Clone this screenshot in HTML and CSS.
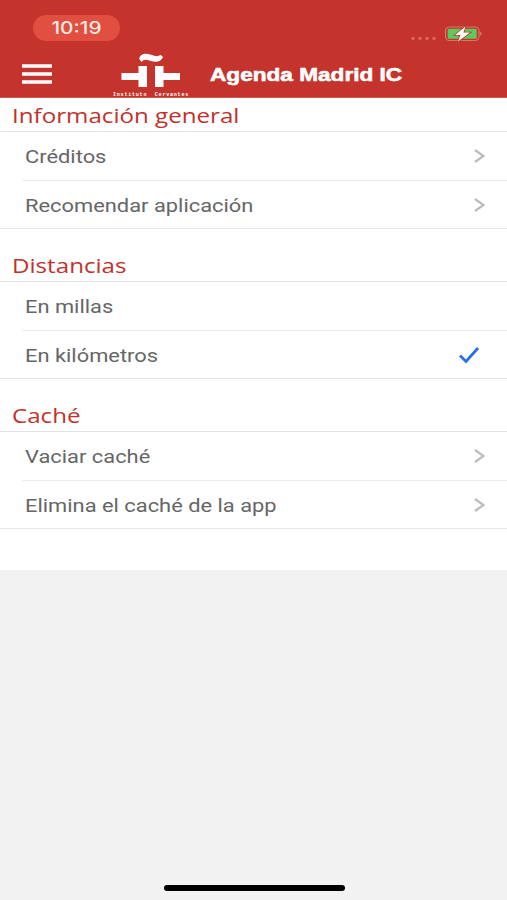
FILE: index.html
```html
<!DOCTYPE html>
<html lang="es">
<head>
<meta charset="utf-8">
<title>Agenda Madrid IC</title>
<link rel="stylesheet" href="styles.css">
</head>
<body>
<header class="top">
  <div class="status">
    <div class="clock"><span class="wide">10:19</span></div>
    <svg class="power" width="74" height="20" viewBox="0 0 74 20">
      <g fill="#da6a5c"><circle cx="4" cy="13.5" r="1.7"/><circle cx="11" cy="13.5" r="1.7"/><circle cx="18" cy="13.5" r="1.7"/><circle cx="25" cy="13.5" r="1.7"/></g>
      <rect x="36.5" y="2" width="33.5" height="13.5" rx="4" fill="none" stroke="#d67768" stroke-width="1.2"/>
      <rect x="38.7" y="3.8" width="29" height="10" rx="1.5" fill="#5ccb5f"/>
      <path d="M71.5 6.5q2 2.200 0 4.400z" fill="#e5a59a"/>
      <path d="M56.500 1.500L46 10h5.500l-2.500 6.500L61 7.500h-6.600z" fill="#fff" stroke="#c4342d" stroke-width="1.600" paint-order="stroke"/>
    </svg>
  </div>
  <div class="bar">
    <svg class="menu" width="30" height="20" viewBox="0 0 30 20"><path d="M0 2h30M0 10h30M0 18h30" stroke="#fff" stroke-width="3.7"/></svg>
    <div class="logo">
      <svg width="60" height="36" viewBox="0 0 60 36" fill="#fff">
        <path d="M18 5.500C20 0 25 0 30 1.800S36.500 3.800 39.500 1.800L42 4C39.500 9.500 34.500 9.500 29 7.700S22.500 7 20.500 9z"/>
        <path d="M17.500 13h8.500v21H17.500V27H.500v-7h17zM34 13h8.500V20h16.500v7H42.500v7H34z"/>
      </svg>
      <div class="brand"><span>Instituto</span><span>Cervantes</span></div>
    </div>
    <h1><span class="wide">Agenda Madrid IC</span></h1>
  </div>
</header>
<main>
  <section>
    <h2><span class="wide">Información general</span></h2>
    <ul>
      <li><span class="wide">Créditos</span><svg class="chevron" viewBox="0 0 11 14"><path d="M1 1l8.500 6L1 13"/></svg></li>
      <li><span class="wide">Recomendar aplicación</span><svg class="chevron" viewBox="0 0 11 14"><path d="M1 1l8.500 6L1 13"/></svg></li>
    </ul>
  </section>
  <section>
    <h2><span class="wide">Distancias</span></h2>
    <ul>
      <li><span class="wide">En millas</span></li>
      <li><span class="wide">En kilómetros</span><svg class="check" viewBox="0 0 22 18"><path d="M2 9.500l6 6L20 2"/></svg></li>
    </ul>
  </section>
  <section>
    <h2><span class="wide">Caché</span></h2>
    <ul>
      <li><span class="wide">Vaciar caché</span><svg class="chevron" viewBox="0 0 11 14"><path d="M1 1l8.500 6L1 13"/></svg></li>
      <li><span class="wide">Elimina el caché de la app</span><svg class="chevron" viewBox="0 0 11 14"><path d="M1 1l8.500 6L1 13"/></svg></li>
    </ul>
  </section>
</main>
<footer><div class="home"></div></footer>
</body>
</html>
```

FILE: styles.css
```css
* { box-sizing: border-box; margin: 0; padding: 0; }
body {
  width: 507px; height: 900px; overflow: hidden;
  display: flex; flex-direction: column;
  background: #f2f2f2; font-family: Roboto, sans-serif;
}
.wide { display: inline-block; white-space: nowrap; transform: scaleX(1.215); transform-origin: left center; }
.top { height: 98px; background: #c4342d; border-bottom: 1px solid #cd574f; flex: none; }
.status { height: 50px; padding: 15px 24px 0 33px; display: flex; justify-content: space-between; }
.clock {
  width: 87px; height: 26px; border-radius: 13px; background: #e04f40; color: #ffeae4;
  display: flex; align-items: center; justify-content: center;
  font: 500 17px/26px Inter, sans-serif;
}
.clock .wide { transform: scaleX(1.22); transform-origin: center; }
.power { margin-top: 10px; }
.bar { display: flex; height: 48px; padding-left: 22px; }
.menu { margin-top: 14px; }
.logo { width: 78px; margin-left: 60px; padding-top: 3px; display: flex; flex-direction: column; align-items: center; }
.logo svg { display: block; }
.brand {
  width: 76px; display: flex; justify-content: space-between;
  font: bold 5px/6px "Liberation Mono", monospace; color: #fff; letter-spacing: .8px; margin-top: 3px;
}
h1 { margin-left: 20px; color: #fff; font: 800 19px/46px "Liberation Sans", sans-serif; padding-top: 2px; -webkit-text-stroke: .6px #fff; }
h1 .wide { transform: scaleX(1.19); }
main { height: 472px; background: #fff; flex: none; }
section { height: 150px; }
h2 { height: 34px; padding-left: 12px; color: #c0322c; font: 400 20px/35px "Open Sans", sans-serif; border-bottom: 1px solid #e4e4e6; }
h2 .wide { transform: scaleX(1.207); }
ul { list-style: none; border-bottom: 1px solid #e6e6e8; height: 97px; }
li { height: 48px; margin-left: 22px; padding: 0 22px 0 3px; display: flex; align-items: center; justify-content: space-between; color: #666; font-size: 18px; line-height: 48px; }
li .wide { padding-top: 1px; }
li + li { border-top: 1px solid #ececee; }
li + li .wide { padding-top: 2px; }
.chevron { width: 11px; height: 14px; fill: none; stroke: #bcbcbf; stroke-width: 2.2; }
.check { width: 22px; height: 18px; margin-right: 5px; fill: none; stroke: #2a70e8; stroke-width: 2.8; }
footer { flex: 1; display: flex; align-items: flex-end; justify-content: center; padding: 0 0 9px 1px; }
.home { width: 181px; height: 6px; border-radius: 3px; background: #000; }
```
